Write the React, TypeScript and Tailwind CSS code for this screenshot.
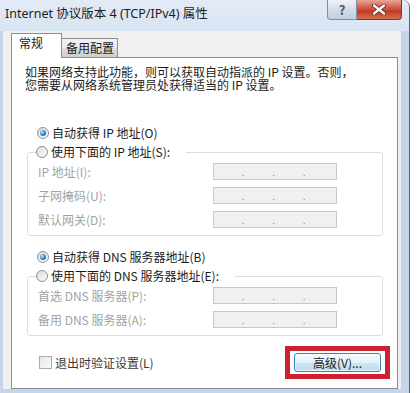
import { ReactNode } from "react";

const cjk = "font-['Noto_Sans_CJK_SC','Noto_Sans',sans-serif]";

function Radio({ checked }: { checked?: boolean }) {
  return (
    <span className="flex size-[12px] shrink-0 items-center justify-center rounded-full border border-[#8f9194] bg-[linear-gradient(135deg,#dcdcdc,#fbfbfb)]">
      {checked && (
        <span className="size-[6px] rounded-full bg-[radial-gradient(circle_at_35%_35%,#bfe6ff,#2c7fcc_55%,#0f4683)]" />
      )}
    </span>
  );
}

function RadioRow({ checked, children }: { checked?: boolean; children: ReactNode }) {
  return (
    <div className="flex h-[14px] items-center gap-[3px] leading-[14px] text-[#1b1b1b]">
      <Radio checked={checked} />
      <span>{children}</span>
    </div>
  );
}

function IpBox() {
  return (
    <div className="grid h-[17px] w-[124px] grid-cols-4 border border-[#c8c8c8] bg-[#f0f0f0]">
      {[0, 1, 2].map((i) => (
        <span
          key={i}
          className="flex items-end justify-end pb-[2px] text-[10px] leading-none text-[#8d8d8d]"
        >
          .
        </span>
      ))}
    </div>
  );
}

function Field({ label }: { label: string }) {
  return (
    <div className="flex h-[17px] items-center">
      <span className="w-[175px] leading-[14px] text-[#a3a3a3]">{label}</span>
      <IpBox />
    </div>
  );
}

function Group({ legend, children }: { legend: string; children: ReactNode }) {
  return (
    <fieldset className="ml-[15px] w-[356px] rounded-[3px] border border-[#d5dfe5]">
      <legend className="ml-[8px] pr-[16px]">
        <RadioRow>{legend}</RadioRow>
      </legend>
      <div className="flex flex-col gap-[7px] pb-[7px] pl-[10px] pt-[4px]">{children}</div>
    </fieldset>
  );
}

export default function App() {
  return (
    <div className={`h-[393px] w-[420px] overflow-hidden bg-white text-[12px] ${cjk}`}>
      <div className="flex h-full w-[410px] flex-col rounded-tr-[7px] border-r border-[#56667c] bg-[#c4d5ea]">
        <div className="flex h-[31px] items-start rounded-tr-[7px] bg-[linear-gradient(#e2ebf6,#d8e4f2)]">
          <span className="pl-[5px] pt-[6px] font-['Noto_Sans','Noto_Sans_CJK_SC',sans-serif] text-[12.5px] leading-[16px] text-[#1c1c1c]">
            Internet 协议版本 4 (TCP/IPv4) 属性
          </span>
          <div className="ml-auto mr-[7px] flex">
            <div className="flex h-[20px] w-[30px] items-center justify-center rounded-bl-[4px] border border-t-0 border-[#7d8ea6] bg-[linear-gradient(#eef3f9,#d3dde9_50%,#c3cfdf)] text-[13px] font-bold leading-none text-[#4d5c72]">
              ?
            </div>
            <div className="flex h-[20px] w-[45px] items-center justify-center rounded-br-[4px] border border-l-0 border-t-0 border-[#7a3a33] bg-[linear-gradient(#e9a597,#d0533f_45%,#c23a27_60%,#d7704f)]">
              <svg width="14" height="11" viewBox="0 0 14 11">
                <path d="M2 1.5 L12 9.5 M12 1.5 L2 9.5" stroke="#5b231c" strokeWidth="4" strokeLinecap="round" />
                <path d="M2 1.5 L12 9.5 M12 1.5 L2 9.5" stroke="#ffffff" strokeWidth="2.4" strokeLinecap="round" />
              </svg>
            </div>
          </div>
        </div>

        <div className="flex flex-1 pb-[4px] pl-[3px] pr-[8px]">
          <div className="flex flex-1 flex-col bg-[#f0f0f0] pl-[8px] pr-[3px] pt-[2px]">
            <div className="relative z-10 -mb-px flex h-[25px] items-end">
              <div className="h-[25px] w-[51px] border-x border-t border-[#898c95] bg-white pl-[7px] pt-[3px] leading-[12px] text-[#1b1b1b]">
                常规
              </div>
              <div className="mb-px h-[19px] w-[56px] border-r border-t border-[#898c95] bg-[linear-gradient(#f3f3f3,#ebebeb_50%,#dddddd_51%,#cfcfcf)] pl-[4px] pt-[3px] leading-[12px] text-[#1b1b1b]">
                备用配置
              </div>
            </div>

            <div className="flex h-[332px] w-[387px] flex-col border border-[#898c95] bg-white">
              <p className="pl-[13px] pt-[7px] leading-[13px] text-[#1b1b1b]">
                如果网络支持此功能，则可以获取自动指派的 IP 设置。否则，
                <br />
                您需要从网络系统管理员处获得适当的 IP 设置。
              </p>

              <div className="mt-[35px] pl-[25px]">
                <RadioRow checked>自动获得 IP 地址(O)</RadioRow>
              </div>
              <div className="mt-[5px]">
                <Group legend="使用下面的 IP 地址(S):">
                  <Field label="IP 地址(I):" />
                  <Field label="子网掩码(U):" />
                  <Field label="默认网关(D):" />
                </Group>
              </div>

              <div className="mt-[14px] pl-[25px]">
                <RadioRow checked>自动获得 DNS 服务器地址(B)</RadioRow>
              </div>
              <div className="mt-[5px]">
                <Group legend="使用下面的 DNS 服务器地址(E):">
                  <Field label="首选 DNS 服务器(P):" />
                  <Field label="备用 DNS 服务器(A):" />
                </Group>
              </div>

              <div className="mt-[10px] flex items-center justify-between pl-[27px] pr-[7px]">
                <div className="flex items-center gap-[3px] text-[#3a3a3a]">
                  <span className="size-[13px] border border-[#a9abae] bg-[linear-gradient(135deg,#e6e6e6,#fafafa)]" />
                  <span className="leading-[14px]">退出时验证设置(L)</span>
                </div>
                <div className="border-[5px] border-[#cd2130] bg-white px-[4px] py-[2px]">
                  <div className="flex h-[19px] w-[87px] items-center justify-center rounded-[3px] border border-[#3c7fb1] bg-[linear-gradient(#f4fafd,#e3f1fa_50%,#cfe6f4_51%,#bcdcf0)] leading-[14px] text-[#1b1b1b] shadow-[inset_0_0_0_1px_rgba(255,255,255,0.7)]">
                    高级(V)...
                  </div>
                </div>
              </div>
            </div>
          </div>
        </div>
      </div>
    </div>
  );
}
